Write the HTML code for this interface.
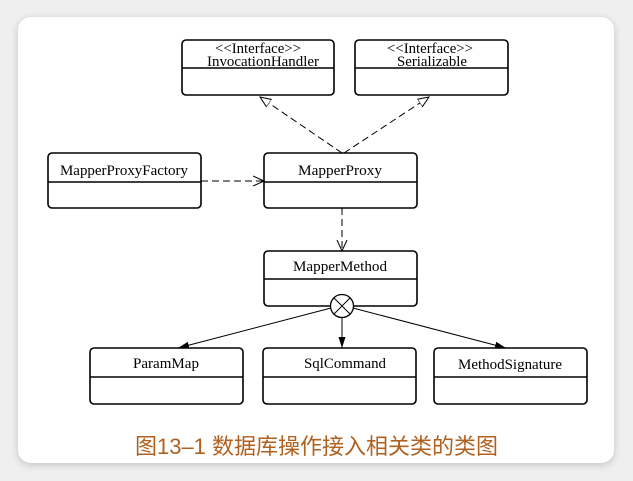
<!DOCTYPE html>
<html><head><meta charset="utf-8"><style>
html,body{margin:0;padding:0;background:#efefef;width:633px;height:481px;overflow:hidden}
.card{position:absolute;left:18px;top:17px;width:596px;height:446px;background:#fff;border-radius:13px;box-shadow:0 2px 8px rgba(0,0,0,.18)}
svg{position:absolute;left:0;top:0}
.cap{position:absolute;left:0;width:633px;top:429px;text-align:center;font:22px "Liberation Sans","Noto Sans CJK SC",sans-serif;color:#b0601f}
</style></head><body>
<div class="card"></div>
<svg width="633" height="481" font-family="Liberation Serif, serif" font-size="15" fill="none" stroke="#000">
<defs><marker id="a" markerUnits="userSpaceOnUse" markerWidth="12" markerHeight="12" refX="11" refY="6" orient="auto"><path d="M0,1 L11,6 L0,11" fill="none" stroke="#000" stroke-width="1"/></marker>
<marker id="f" markerUnits="userSpaceOnUse" markerWidth="12" markerHeight="10" refX="11" refY="5" orient="auto"><path d="M0,1.5 L11,5 L0,8.5 z" fill="#000" stroke="none"/></marker>
<marker id="t" markerUnits="userSpaceOnUse" markerWidth="12" markerHeight="12" refX="11" refY="6" orient="auto"><path d="M0,1.5 L11,6 L0,10.5 z" fill="#fff" stroke="#000" stroke-width="1"/></marker></defs>
<g stroke-width="1.6">
<rect x="182" y="40" width="152" height="55" rx="4"/><line x1="182" y1="68" x2="334" y2="68"/>
<rect x="355" y="40" width="153" height="55" rx="4"/><line x1="355" y1="68" x2="508" y2="68"/>
<rect x="48" y="153" width="153" height="55" rx="4"/><line x1="48" y1="182" x2="201" y2="182"/>
<rect x="264" y="153" width="153" height="55" rx="4"/><line x1="264" y1="182" x2="417" y2="182"/>
<rect x="264" y="251" width="153" height="55" rx="4"/><line x1="264" y1="279" x2="417" y2="279"/>
<rect x="90" y="348" width="153" height="56" rx="4"/><line x1="90" y1="377" x2="243" y2="377"/>
<rect x="263" y="348" width="153" height="56" rx="4"/><line x1="263" y1="377" x2="416" y2="377"/>
<rect x="434" y="348" width="153" height="56" rx="4"/><line x1="434" y1="377" x2="587" y2="377"/>
</g>
<g stroke-width="1" stroke-dasharray="7,4">
<line x1="342" y1="153" x2="260" y2="97" marker-end="url(#t)"/>
<line x1="344" y1="153" x2="429" y2="97" marker-end="url(#t)"/>
<line x1="201" y1="181" x2="264" y2="181" marker-end="url(#a)"/>
<line x1="342" y1="208" x2="342" y2="251" marker-end="url(#a)"/>
</g>
<g stroke-width="1">
<line x1="331" y1="308" x2="178" y2="348" marker-end="url(#f)"/>
<line x1="342" y1="317" x2="342" y2="348" marker-end="url(#f)"/>
<line x1="353" y1="308" x2="506" y2="348" marker-end="url(#f)"/>
<circle cx="342" cy="306" r="11.5" fill="#fff" stroke-width="1.3"/>
<line x1="334" y1="298" x2="350" y2="314"/><line x1="350" y1="298" x2="334" y2="314"/>
</g>
<g fill="#000" stroke="none" text-anchor="middle">
<text x="258" y="53" textLength="86" lengthAdjust="spacingAndGlyphs">&lt;&lt;Interface&gt;&gt;</text><text x="263" y="66" textLength="112" lengthAdjust="spacingAndGlyphs">InvocationHandler</text>
<text x="430" y="53" textLength="86" lengthAdjust="spacingAndGlyphs">&lt;&lt;Interface&gt;&gt;</text><text x="432" y="66" textLength="70" lengthAdjust="spacingAndGlyphs">Serializable</text>
<text x="124" y="175" textLength="128" lengthAdjust="spacingAndGlyphs">MapperProxyFactory</text>
<text x="340" y="175" textLength="84" lengthAdjust="spacingAndGlyphs">MapperProxy</text>
<text x="340" y="271" textLength="94" lengthAdjust="spacingAndGlyphs">MapperMethod</text>
<text x="166" y="368" textLength="66" lengthAdjust="spacingAndGlyphs">ParamMap</text>
<text x="345" y="368" textLength="82" lengthAdjust="spacingAndGlyphs">SqlCommand</text>
<text x="510" y="369" textLength="104" lengthAdjust="spacingAndGlyphs">MethodSignature</text>
</g>
</svg>
<div class="cap">图13–1 数据库操作接入相关类的类图</div>
</body></html>
